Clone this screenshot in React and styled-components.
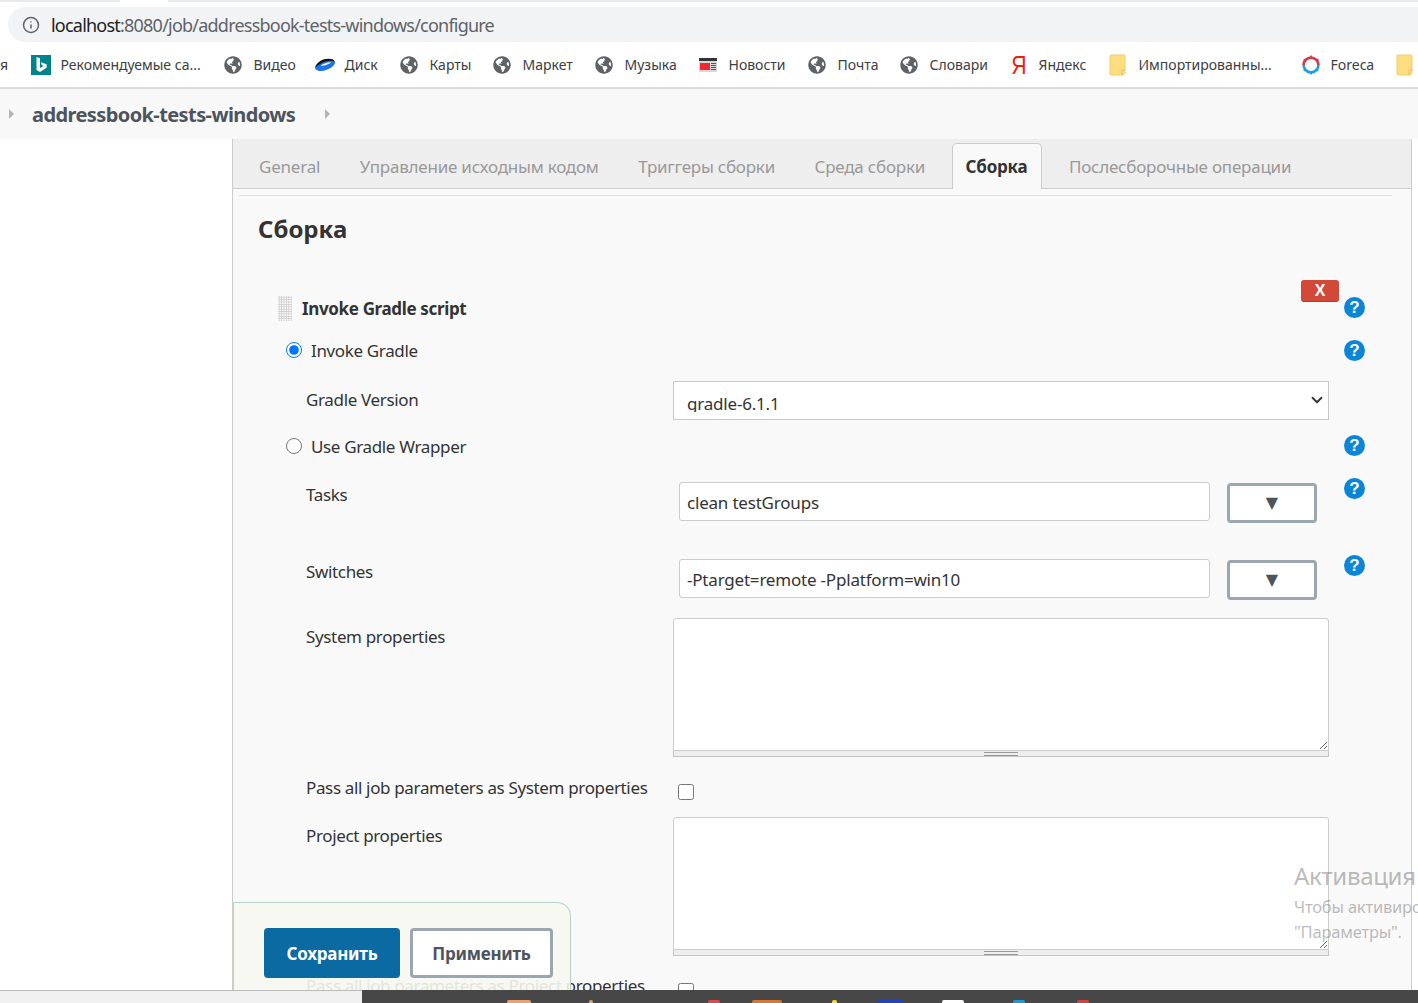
import React from "react";
import styled, { createGlobalStyle } from "styled-components";
import { Info, ChevronDown } from "lucide-react";
import { FaGlobeAmericas } from "react-icons/fa";

const GlobalStyle = createGlobalStyle`
  html, body {
    margin: 0;
    padding: 0;
    background: #fff;
  }
  * {
    box-sizing: border-box;
  }
`;

const FONT = `"Noto Sans", "Open Sans", sans-serif`;

const Page = styled.div`
  position: relative;
  width: 1418px;
  height: 1003px;
  overflow: hidden;
  display: flex;
  flex-direction: column;
  background: #fff;
  font-family: ${FONT};
  color: #333;
`;

/* browser chrome */
const TabStrip = styled.div`
  height: 7px;
  display: flex;
  align-items: flex-start;
`;
const TabEdge = styled.div`
  height: 2px;
  width: ${(p) => p.$w}px;
  flex: ${(p) => (p.$w ? "none" : 1)};
  background: ${(p) => (p.$white ? "#fff" : "#e8eaed")};
`;
const AddressRow = styled.div`
  height: 35px;
  padding-left: 8px;
`;
const AddressPill = styled.div`
  height: 35px;
  display: flex;
  align-items: center;
  gap: 11px;
  padding-left: 14px;
  border-radius: 17px 0 0 17px;
  background: #f1f3f4;
  color: #5f6368;
  font-size: 18px;
  letter-spacing: -0.78px;
`;
const Host = styled.span`
  color: #202124;
`;
const BookmarkBar = styled.div`
  height: 47px;
  display: flex;
  align-items: center;
  border-bottom: 2px solid #dadce0;
  font-size: 14px;
  color: #3c4043;
`;
const Bookmark = styled.div`
  width: ${(p) => p.$w}px;
  flex: none;
  display: flex;
  align-items: center;
  gap: 9.5px;
  white-space: nowrap;
`;
const IconSlot = styled.span`
  width: 20px;
  height: 22px;
  flex: none;
  display: flex;
  align-items: center;
  justify-content: ${(p) => (p.$center ? "center" : "flex-start")};
`;
const YandexMark = styled.span`
  color: #f01c0c;
  font-family: "Liberation Sans", sans-serif;
  font-size: 25px;
  line-height: 22px;
  transform: scaleX(0.85);
`;
const Breadcrumbs = styled.div`
  height: 50px;
  display: flex;
  align-items: center;
  padding-left: 9px;
  background: #f8f8f8;
  color: #4d545d;
  font-size: 20px;
  font-weight: 700;
  letter-spacing: -0.59px;
`;
const Caret = styled.span`
  width: 0;
  height: 0;
  border-left: 5px solid #b4b4b4;
  border-top: 5px solid transparent;
  border-bottom: 5px solid transparent;
`;
const CrumbText = styled.span`
  margin: 0 30px 0 18px;
`;

/* jenkins page */
const Main = styled.div`
  height: 851px;
  display: flex;
  overflow: hidden;
`;
const Sidebar = styled.div`
  width: 232px;
  flex: none;
`;
const Panel = styled.div`
  width: 1180px;
  flex: none;
  border-left: 1px solid #ccc;
  border-right: 1px solid #ccc;
  background: #f9f9f9;
`;
const TabBar = styled.div`
  height: 50px;
  padding: 4px 0 0 12px;
  display: flex;
  background: #eee;
  border-bottom: 1px solid #ccc;
  font-size: 17px;
  letter-spacing: -0.22px;
`;
const Tab = styled.div`
  height: 46px;
  margin: 0 ${(p) => (p.$active ? 12.5 : 11.5)}px 0 ${(p) => (p.$active ? 1 : 0)}px;
  padding: 0 14px 0 ${(p) => (p.$active ? 13 : 14)}px;
  display: flex;
  align-items: center;
  white-space: nowrap;
  color: ${(p) => (p.$active ? "#333" : "#999")};
  font-weight: ${(p) => (p.$active ? 700 : 400)};
  background: ${(p) => (p.$active ? "#f9f9f9" : "transparent")};
  border: ${(p) => (p.$active ? "1px solid #ccc" : "none")};
  border-bottom: none;
  border-radius: 5px 5px 0 0;
`;
const Rule = styled.div`
  height: 1px;
  margin: 6px 19px 0 6px;
  background: #ddd;
`;
const Heading = styled.h2`
  margin: 0;
  padding: 16px 0 0 25px;
  height: 84px;
  font-size: 24px;
  line-height: 34px;
  font-weight: 700;
  color: #333;
`;
const Form = styled.div`
  padding-left: 45px;
  font-size: 17px;
  line-height: 22px;
  letter-spacing: -0.35px;
`;
const SectionHeader = styled.div`
  height: 50px;
  width: 1087px;
  display: flex;
  align-items: flex-start;
`;
const Grip = styled.div`
  width: 14px;
  height: 25px;
  margin-top: 16px;
  background-image: radial-gradient(#cfcfcf 0.8px, transparent 0.9px);
  background-size: 2.4px 2.4px;
`;
const SectionTitle = styled.div`
  flex: 1;
  margin: 18px 0 0 10px;
  font-size: 17px;
  font-weight: 700;
`;
const DeleteButton = styled.button`
  width: 38px;
  height: 22px;
  margin-right: 5px;
  padding: 0;
  border: none;
  border-bottom: 1px solid #b53a2c;
  border-radius: 3px;
  background: #d24939;
  color: #fff;
  font-family: "Liberation Sans", sans-serif;
  font-size: 16px;
  font-weight: 700;
`;
const HelpIcon = styled.div`
  width: 21px;
  height: 21px;
  margin-top: ${(p) => p.$top}px;
  display: flex;
  align-items: center;
  justify-content: center;
  border-radius: 50%;
  background: #0b85d6;
  color: #fff;
  font-family: "Liberation Sans", sans-serif;
  font-size: 17px;
  font-weight: 700;
  letter-spacing: 0;
`;
const Row = styled.div`
  height: ${(p) => p.$h}px;
  display: grid;
  grid-template-columns: 395px 656px 36px;
`;
const Label = styled.div`
  padding: ${(p) => p.$top}px 0 0 28px;
  white-space: nowrap;
`;
const RadioLabel = styled.label`
  padding: ${(p) => p.$top - 2}px 0 0 8px;
  display: flex;
  align-items: flex-start;
  gap: 9px;
  white-space: nowrap;
`;
const Radio = styled.input`
  width: 16px;
  height: 16px;
  margin: 2px 0 0;
  flex: none;
`;
const Cell = styled.div`
  padding-top: ${(p) => p.$top}px;
`;
const HelpCell = styled.div`
  padding-left: 15px;
`;
const SelectBox = styled.div`
  height: 39px;
  padding: 11px 2px 0 13px;
  display: flex;
  justify-content: space-between;
  align-items: flex-start;
  background: #fff;
  border: 1px solid #c8c8c8;
  color: #333;
  letter-spacing: -0.2px;
`;
const SelectText = styled.span`
  height: 19px;
  overflow: hidden;
`;
const SelectChevron = styled(ChevronDown)`
  margin-top: -2px;
`;
const ComboRow = styled.div`
  display: flex;
  gap: 17px;
  padding-left: 6px;
`;
const TextInput = styled.input`
  width: 531px;
  height: 39px;
  padding: 2px 7px 0;
  background: #fff;
  border: 1px solid #ccc;
  border-radius: 3px;
  font: inherit;
  letter-spacing: -0.2px;
  color: #333;
`;
const DropButton = styled.button`
  width: 90px;
  height: 40px;
  margin-top: 1px;
  padding: 0 0 2px;
  background: #fff;
  border: 3px solid #9aa7ae;
  border-radius: 4px;
  color: #4d545d;
  font-family: "DejaVu Sans", sans-serif;
  font-size: 16px;
`;
const TextArea = styled.textarea`
  display: block;
  width: 656px;
  height: 133px;
  margin: 0;
  background: #fff;
  border: 1px solid #ccc;
  border-radius: 3px 3px 0 0;
  resize: vertical;
`;
const ResizeBar = styled.div`
  height: 6px;
  display: flex;
  justify-content: center;
  background: #eee;
  border: 1px solid #c4c4c4;
  border-top: none;
`;
const ResizeHandle = styled.div`
  width: 34px;
  height: 4px;
  margin-top: 1px;
  border-top: 1px solid #999;
  border-bottom: 1px solid #999;
`;
const Checkbox = styled.input`
  display: block;
  width: 16px;
  height: 16px;
  margin: 0 0 0 5px;
`;

/* things lying over the page */
const SaveBar = styled.div`
  position: absolute;
  left: 233px;
  top: 902px;
  width: 338px;
  height: 88px;
  padding: 25px 0 0 30px;
  display: flex;
  align-items: flex-start;
  gap: 10px;
  background: rgba(245, 247, 239, 0.9);
  border: 1px solid #b9d3c4;
  border-bottom: none;
  border-left-color: #ccc;
  border-radius: 0 14px 0 0;
`;
const SaveButton = styled.button`
  width: ${(p) => p.$w}px;
  height: 50px;
  padding: 0;
  border: ${(p) => (p.$primary ? "none" : "3px solid #9aa7ae")};
  border-radius: 4px;
  background: ${(p) => (p.$primary ? "#0b6aa2" : "#fff")};
  color: ${(p) => (p.$primary ? "#fff" : "#4d545d")};
  font-family: ${FONT};
  font-size: 17px;
  font-weight: 700;
  letter-spacing: -0.25px;
`;
const Watermark = styled.div`
  position: absolute;
  left: 1294px;
  top: 860px;
  color: rgba(120, 120, 120, 0.5);
  white-space: nowrap;
  font-size: 16.5px;
  line-height: 25px;
  letter-spacing: -0.2px;
`;
const WatermarkTitle = styled.div`
  margin-bottom: 2px;
  font-size: 24px;
  line-height: 32px;
  letter-spacing: -0.3px;
`;

const Taskbar = styled.div`
  height: 13px;
  display: flex;
`;
const TaskbarSide = styled.div`
  width: 362px;
  flex: none;
  background: #f0f0f0;
  border-top: 1px solid #bbb;
`;
const TaskbarDark = styled.div`
  flex: 1;
  display: flex;
  align-items: flex-end;
  background: #474747;
`;
const TaskIcon = styled.span`
  width: ${(p) => p.$w}px;
  height: 3px;
  margin-left: ${(p) => p.$gap}px;
  background: ${(p) => p.$color};
  border-radius: 2px 2px 0 0;
`;

function BingIcon() {
  return (
    <svg width="20" height="20" viewBox="0 0 20 20">
      <rect width="20" height="20" fill="#00838a" />
      <path d="M5.5 2 L9 3.2 V13 L12.6 11 L10.8 10 L9.8 7.2 L15.6 9.3 V12.8 L9 17 L5.5 15 Z" fill="#fff" />
    </svg>
  );
}

function DiskIcon() {
  return (
    <svg width="21" height="16" viewBox="0 0 21 16">
      <ellipse cx="10.5" cy="8" rx="11" ry="5.4" transform="rotate(-20 10.5 8)" fill="#1a73e8" />
      <path d="M0.5 10.5 C2 5 8 1.5 14 1.5 C18 1.5 20 3 20.5 4 C16 2.5 7 4 0.5 10.5 Z" fill="#111" />
      <path d="M6 9 C9 6.5 13 5 17 5.2 C14 7.5 10 9.2 6 9 Z" fill="#fff" />
    </svg>
  );
}

function NewsIcon() {
  return (
    <svg width="18" height="14" viewBox="0 0 18 14">
      <rect width="18" height="14" fill="#d8d8d8" />
      <rect width="18" height="3" fill="#333" />
      <rect x="1" y="5" width="10" height="7" fill="#f0282d" />
      <path d="M12 5.5 H17 M12 7.5 H17 M12 9.5 H17 M12 11.5 H17" stroke="#555" />
    </svg>
  );
}

function FolderIcon() {
  return (
    <svg width="17" height="22" viewBox="0 0 17 22">
      <path d="M1 2 Q1 1 2 1 H15 Q16 1 16 2 V19 L14 21 H2 Q1 21 1 20 Z" fill="#fcdd7f" stroke="#f3cd68" />
      <path d="M13 21 V16 H16" fill="none" stroke="#e9c25c" />
    </svg>
  );
}

function ForecaIcon() {
  return (
    <svg width="20" height="22" viewBox="0 0 20 22">
      <path d="M2.6 11 A7.4 7.4 0 0 1 17.4 11" fill="none" stroke="#d23b4b" strokeWidth="2.6" />
      <path d="M2.6 11 A7.4 7.4 0 0 0 17.4 11" fill="none" stroke="#1ba1e2" strokeWidth="2.6" />
      <path d="M10 1.5 V3.5 M2.6 5.5 L4.3 6.5 M17.4 5.5 L15.7 6.5" stroke="#d23b4b" strokeWidth="1.6" />
      <path d="M10 18.5 V20.5 M2.6 16.5 L4.3 15.5 M17.4 16.5 L15.7 15.5" stroke="#1ba1e2" strokeWidth="1.6" />
    </svg>
  );
}

const globe = <FaGlobeAmericas size={18} color="#5f6368" />;

const bookmarks = [
  { w: 193, icon: <BingIcon />, text: "Рекомендуемые са..." },
  { w: 91, icon: globe, text: "Видео" },
  { w: 85, icon: <DiskIcon />, text: "Диск" },
  { w: 93, icon: globe, text: "Карты" },
  { w: 102, icon: globe, text: "Маркет" },
  { w: 104, icon: globe, text: "Музыка" },
  { w: 109, icon: <NewsIcon />, text: "Новости" },
  { w: 92, icon: globe, text: "Почта" },
  { w: 109, icon: globe, text: "Словари" },
  { w: 100, icon: <YandexMark>Я</YandexMark>, text: "Яндекс", center: true },
  { w: 192, icon: <FolderIcon />, text: "Импортированны..." },
  { w: 95, icon: <ForecaIcon />, text: "Foreca" },
  { w: 22, icon: <FolderIcon />, text: "" },
];

const tabs = ["General", "Управление исходным кодом", "Триггеры сборки", "Среда сборки", "Сборка", "Послесборочные операции"];

const taskIcons = [
  { gap: 145, w: 24, color: "#f0a070" },
  { gap: 58, w: 4, color: "#c9a882" },
  { gap: 115, w: 12, color: "#e0484a" },
  { gap: 32, w: 30, color: "#d9772f" },
  { gap: 50, w: 5, color: "#f5e020" },
  { gap: 40, w: 26, color: "#2040c8" },
  { gap: 39, w: 22, color: "#fff" },
  { gap: 49, w: 12, color: "#1c9ad6" },
  { gap: 52, w: 12, color: "#d84040" },
];

function Resizable() {
  return (
    <>
      <TextArea readOnly />
      <ResizeBar>
        <ResizeHandle />
      </ResizeBar>
    </>
  );
}

export default function App() {
  return (
    <>
      <GlobalStyle />
      <Page>
        <TabStrip>
          <TabEdge $w={120} />
          <TabEdge $w={48} $white />
          <TabEdge />
        </TabStrip>
        <AddressRow>
          <AddressPill>
            <Info size={18} strokeWidth={2} color="#5f6368" />
            <span>
              <Host>localhost</Host>:8080/job/addressbook-tests-windows/configure
            </span>
          </AddressPill>
        </AddressRow>
        <BookmarkBar>
          <Bookmark $w={31}>я</Bookmark>
          {bookmarks.map((b, i) => (
            <Bookmark key={i} $w={b.w}>
              <IconSlot $center={b.center}>{b.icon}</IconSlot>
              {b.text && <span>{b.text}</span>}
            </Bookmark>
          ))}
        </BookmarkBar>
        <Breadcrumbs>
          <Caret />
          <CrumbText>addressbook-tests-windows</CrumbText>
          <Caret />
        </Breadcrumbs>
        <Main>
          <Sidebar />
          <Panel>
            <TabBar>
              {tabs.map((t) => (
                <Tab key={t} $active={t === "Сборка"}>
                  {t}
                </Tab>
              ))}
            </TabBar>
            <Rule />
            <Heading>Сборка</Heading>
            <Form>
              <SectionHeader>
                <Grip />
                <SectionTitle>Invoke Gradle script</SectionTitle>
                <DeleteButton>X</DeleteButton>
                <HelpIcon $top={17}>?</HelpIcon>
              </SectionHeader>
              <Row $h={45}>
                <RadioLabel $top={12}>
                  <Radio type="radio" name="gradle" defaultChecked />
                  Invoke Gradle
                </RadioLabel>
                <div />
                <HelpCell>
                  <HelpIcon $top={10}>?</HelpIcon>
                </HelpCell>
              </Row>
              <Row $h={50}>
                <Label $top={14}>Gradle Version</Label>
                <Cell $top={6}>
                  <SelectBox>
                    <SelectText>gradle-6.1.1</SelectText>
                    <SelectChevron size={18} strokeWidth={2.4} color="#333" />
                  </SelectBox>
                </Cell>
              </Row>
              <Row $h={45}>
                <RadioLabel $top={13}>
                  <Radio type="radio" name="gradle" />
                  Use Gradle Wrapper
                </RadioLabel>
                <div />
                <HelpCell>
                  <HelpIcon $top={10}>?</HelpIcon>
                </HelpCell>
              </Row>
              <Row $h={77}>
                <Label $top={14}>Tasks</Label>
                <Cell $top={12}>
                  <ComboRow>
                    <TextInput readOnly value="clean testGroups" />
                    <DropButton>▼</DropButton>
                  </ComboRow>
                </Cell>
                <HelpCell>
                  <HelpIcon $top={8}>?</HelpIcon>
                </HelpCell>
              </Row>
              <Row $h={61}>
                <Label $top={14}>Switches</Label>
                <Cell $top={12}>
                  <ComboRow>
                    <TextInput readOnly value="-Ptarget=remote -Pplatform=win10" />
                    <DropButton>▼</DropButton>
                  </ComboRow>
                </Cell>
                <HelpCell>
                  <HelpIcon $top={8}>?</HelpIcon>
                </HelpCell>
              </Row>
              <Row $h={162}>
                <Label $top={18}>System properties</Label>
                <Cell $top={10}>
                  <Resizable />
                </Cell>
              </Row>
              <Row $h={42}>
                <Label $top={7}>Pass all job parameters as System properties</Label>
                <Cell $top={14}>
                  <Checkbox type="checkbox" />
                </Cell>
              </Row>
              <Row $h={158}>
                <Label $top={13}>Project properties</Label>
                <Cell $top={5}>
                  <Resizable />
                </Cell>
              </Row>
              <Row $h={42}>
                <Label $top={5}>Pass all job parameters as Project properties</Label>
                <Cell $top={13}>
                  <Checkbox type="checkbox" />
                </Cell>
              </Row>
            </Form>
          </Panel>
        </Main>
        <Taskbar>
          <TaskbarSide />
          <TaskbarDark>
            {taskIcons.map((t, i) => (
              <TaskIcon key={i} $gap={t.gap} $w={t.w} $color={t.color} />
            ))}
          </TaskbarDark>
        </Taskbar>
        <SaveBar>
          <SaveButton $primary $w={136}>Сохранить</SaveButton>
          <SaveButton $w={143}>Применить</SaveButton>
        </SaveBar>
        <Watermark>
          <WatermarkTitle>Активация Windows</WatermarkTitle>
          <div>Чтобы активировать Windows, перейдите в раздел</div>
          <div>"Параметры".</div>
        </Watermark>
      </Page>
    </>
  );
}
